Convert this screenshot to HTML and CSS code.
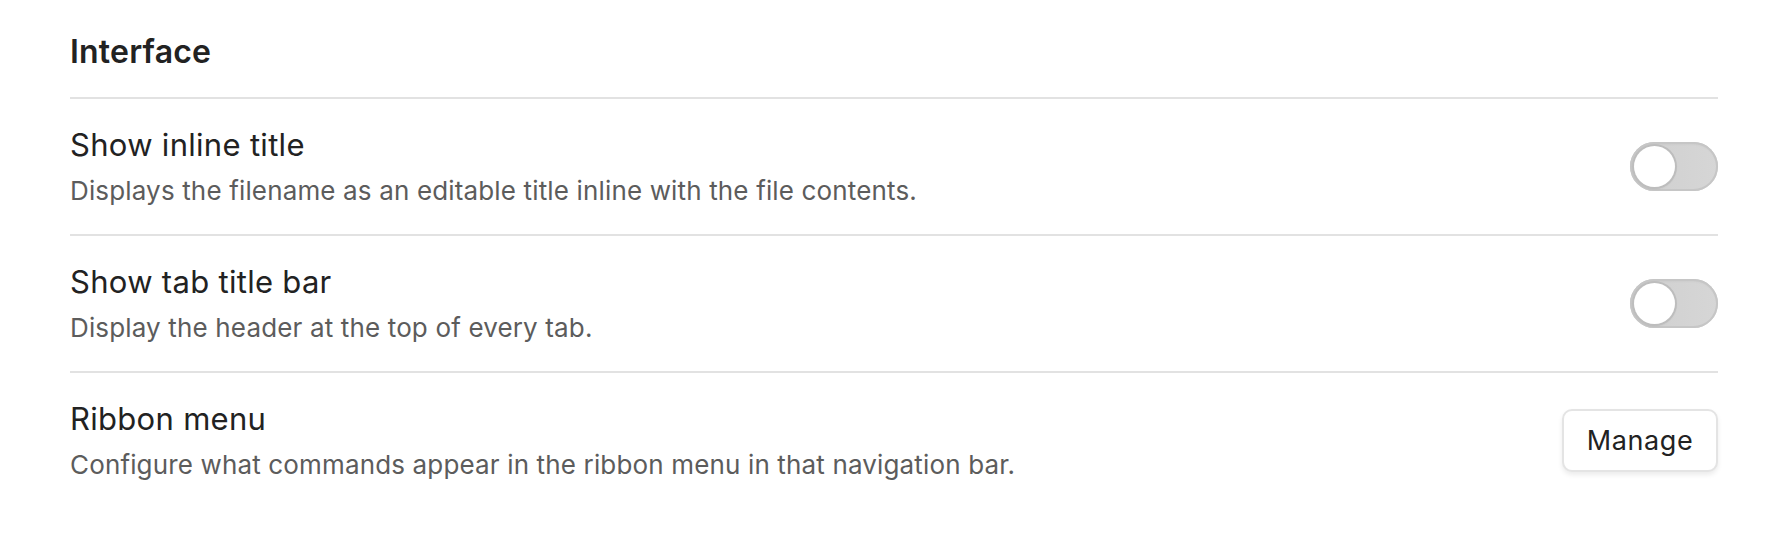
FILE: index.html
```html
<!DOCTYPE html>
<html lang="en">
<head>
    <meta charset="UTF-8">
    <meta name="viewport" content="width=device-width, initial-scale=1.0">
    <title>Interface Settings</title>
    <link rel="stylesheet" href="styles.css">
</head>
<body>

    <div class="settings">
        <div class="setting-heading">Interface</div>

        <div class="setting-item">
            <div class="setting-info">
                <div class="setting-name">Show inline title</div>
                <div class="setting-desc">Displays the filename as an editable title inline with the file contents.</div>
            </div>
            <div class="setting-control">
                <div class="toggle"></div>
            </div>
        </div>

        <div class="setting-item">
            <div class="setting-info">
                <div class="setting-name">Show tab title bar</div>
                <div class="setting-desc">Display the header at the top of every tab.</div>
            </div>
            <div class="setting-control">
                <div class="toggle"></div>
            </div>
        </div>

        <div class="setting-item">
            <div class="setting-info">
                <div class="setting-name">Ribbon menu</div>
                <div class="setting-desc">Configure what commands appear in the ribbon menu in that navigation bar.</div>
            </div>
            <div class="setting-control">
                <button class="btn">Manage</button>
            </div>
        </div>
    </div>

</body>
</html>
```

FILE: styles.css
```css
/* Page */
body {
    margin: 0;
    background-color: #fff;
    color: #222;
    font-family: Inter, "Noto Sans", sans-serif;
}
.settings {
    padding: 32px 74px 0 70px;
}
/* Section heading */
.setting-heading {
    font-size: 32px;
    font-weight: 600;
    line-height: 40px;
    letter-spacing: 0.2px;
    padding-bottom: 25px;
}
/* One row */
.setting-item {
    display: flex;
    align-items: center;
    justify-content: space-between;
    border-top: 2px solid #e2e2e2;
    padding: 26px 0 26px;
}
.setting-name {
    font-size: 31px;
    line-height: 40px;
    letter-spacing: 0.3px;
    color: #222;
}
.setting-desc {
    font-size: 26px;
    line-height: 35px;
    letter-spacing: 0.15px;
    margin-top: 8px;
    color: #5c5c5c;
}
/* Toggle switch */
.toggle {
    position: relative;
    width: 88px;
    height: 49px;
    border-radius: 25px;
    background: linear-gradient(to right, #cfcfcf, #d6d6d6);
    box-shadow: inset 0 0 0 2px #c6c6c6, inset 0 2px 3px rgba(0, 0, 0, 0.06);
}
.toggle::after {
    content: "";
    position: absolute;
    left: 4px;
    top: 4px;
    width: 41px;
    height: 41px;
    border-radius: 50%;
    background-color: #fff;
    box-shadow: 0 0 0 2px #bdbdbd, 0 1px 3px rgba(0, 0, 0, 0.2);
}
/* Button */
.btn {
    width: 156px;
    height: 63px;
    padding: 0;
    border: 2px solid #e4e4e4;
    border-radius: 10px;
    background-color: #fff;
    color: #222;
    font-family: inherit;
    font-size: 27px;
    letter-spacing: 0.6px;
    box-shadow: 0 3px 5px rgba(0, 0, 0, 0.08);
    cursor: pointer;
}
```
